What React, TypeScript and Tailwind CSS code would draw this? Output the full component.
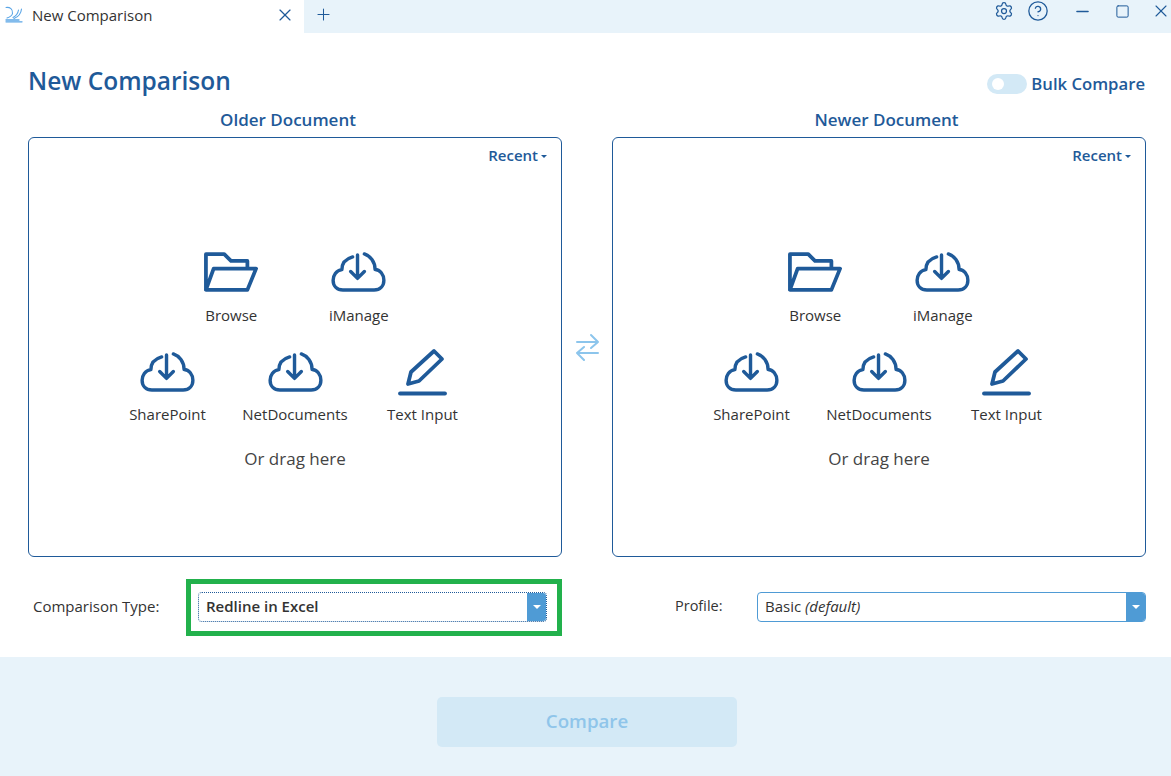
import { Settings, CircleHelp, Minus, Square, X, Plus } from "lucide-react";

const BLUE = "#1f5a99";

function CloudIcon() {
  return (
    <svg width="55" height="41" viewBox="0 0 56 42" fill="none" stroke={BLUE} strokeWidth="3.5" strokeLinecap="round" strokeLinejoin="round">
      <path d="M22 5C15 7 11 12 11 18C5 19 2 24 2 29C2 35 6 39 12 39H44C50 39 54 35 54 29C54 23 50 18 45 18C45 10 40 4 34 2" />
      <path d="M27 3V27M20 20L27 27L34 20" />
    </svg>
  );
}

function FolderIcon() {
  return (
    <svg width="54" height="41" viewBox="0 0 56 42" fill="none" stroke={BLUE} strokeWidth="3.9" strokeLinejoin="round">
      <path d="M2 39V2H21L28 9H45V17M2 39H45L54 17H10L2 39Z" />
    </svg>
  );
}

function PencilIcon() {
  return (
    <svg width="50" height="48" viewBox="0 0 50 48" fill="none" stroke={BLUE} strokeWidth="3.8" strokeLinejoin="round" strokeLinecap="round">
      <path d="M10 36L13 24L36 3L44 11L21 33Z" />
      <path d="M2 45.5H47" strokeWidth="3.8" />
    </svg>
  );
}

function Source({ icon, label, tight }: { icon: React.ReactNode; label: string; tight?: boolean }) {
  return (
    <div className="w-[127.5px] flex flex-col items-center">
      <div className="h-[48px] flex items-center justify-center">{icon}</div>
      <div className={`${tight ? "mt-[8px] mb-[1px]" : "mt-[9px]"} text-[15px] leading-[20px] text-[#333] whitespace-nowrap`}>{label}</div>
    </div>
  );
}

function DropPanel() {
  return (
    <div className="w-[534px] h-[420px] border border-[#1f5a99] rounded-[6px] flex flex-col">
      <div className="h-[34px] flex justify-end items-center gap-[3px] pr-[14px] text-[15px] font-semibold text-[#1f5a99]">
        Recent
        <span className="mt-[2px] w-0 h-0 border-x-[3px] border-x-transparent border-t-[3px] border-t-[#1f5a99]" />
      </div>
      <div className="pt-[76px] flex flex-col items-center">
        <div className="flex">
          <Source icon={<FolderIcon />} label="Browse" />
          <Source icon={<CloudIcon />} label="iManage" />
        </div>
        <div className="flex mt-[23px]">
          <Source tight icon={<CloudIcon />} label="SharePoint" />
          <Source tight icon={<CloudIcon />} label="NetDocuments" />
          <Source tight icon={<PencilIcon />} label="Text Input" />
        </div>
        <div className="mt-[22px] text-[17px] leading-[24px] text-[#444]">Or drag here</div>
      </div>
    </div>
  );
}

function SelectBox({ focused, children }: { focused?: boolean; children: React.ReactNode }) {
  return (
    <div className={`flex-1 h-[30px] flex rounded-[4px] overflow-hidden border ${focused ? "border-dotted border-[#1f5a99]" : "border-[#4f9bd5]"}`}>
      <div className="flex-1 pl-[7px] pb-[2px] flex items-center text-[15px] text-[#333]">{children}</div>
      <div className="w-[19px] bg-[#4f9bd5] flex items-center justify-center">
        <span className="w-0 h-0 border-x-[4px] border-x-transparent border-t-[4px] border-t-white" />
      </div>
    </div>
  );
}

export default function App() {
  return (
    <div className="w-[1171px] h-[776px] overflow-hidden bg-white flex flex-col" style={{ fontFamily: '"Open Sans", "Noto Sans", sans-serif' }}>
      {/* Title bar */}
      <div className="h-[33px] flex bg-[#e8f3fa] shrink-0">
        <div className="w-[304px] bg-white flex items-center pl-[5px] pb-[3px]">
          <svg width="18" height="18" viewBox="0 0 18 18" fill="none" stroke="#5aa5e6" strokeWidth="1.1" strokeLinecap="round">
            <path d="M1 1.5C5 1 8 3 7.5 7.5C7 10 5 11 2 12" />
            <path d="M16.5 3C16 8 13 11 9 12.5" />
            <path d="M13.5 4C13 7 11 10 8 11.5" />
            <path d="M1 14H14" strokeWidth="1.3" />
            <path d="M1 15.8H17" strokeWidth="1.3" />
          </svg>
          <span className="ml-[9px] text-[15px] text-[#333]">New Comparison</span>
          <X className="ml-auto mr-[9px]" size={20} strokeWidth={1.4} color={BLUE} />
        </div>
        <div className="w-[38px] flex items-center justify-center pb-[4px]">
          <Plus size={19} strokeWidth={1.3} color={BLUE} />
        </div>
        <div className="flex-1 flex justify-end items-center h-[22px]">
          <Settings size={20} strokeWidth={1.5} color={BLUE} />
          <CircleHelp className="ml-[13px]" size={22} strokeWidth={1.4} color={BLUE} />
          <Minus className="ml-[24px]" size={19} strokeWidth={2} color={BLUE} />
          <Square className="ml-[23px]" size={15} strokeWidth={1.6} color={BLUE} />
          <X className="ml-[21px]" size={20} strokeWidth={1.3} color={BLUE} />
        </div>
      </div>

      {/* Main */}
      <div className="flex-1 pl-[28px] pr-[25px]">
        <div className="h-[46px] mt-[26px] flex items-center justify-between">
          <h1 className="text-[24.5px] font-semibold text-[#1f5a99] leading-[42px] pb-[2px]">New Comparison</h1>
          <div className="flex items-center gap-[4px] mt-[4px] pr-[1px]">
            <div className="w-[40px] h-[20px] rounded-full bg-[#d3e9f6] flex items-center pl-[5px]">
              <span className="w-[12px] h-[12px] rounded-full bg-white" />
            </div>
            <span className="text-[16.7px] font-semibold text-[#1f5a99]">Bulk Compare</span>
          </div>
        </div>

        <div className="h-[32px] flex items-start pt-[1px]">
          <div className="w-[534px] pr-[14px] text-center text-[17px] leading-[28px] font-semibold text-[#1f5a99]">Older Document</div>
          <div className="w-[50px]" />
          <div className="w-[534px] pl-[15px] text-center text-[17px] leading-[28px] font-semibold text-[#1f5a99]">Newer Document</div>
        </div>

        <div className="flex items-center">
          <DropPanel />
          <div className="w-[50px] flex justify-center">
            <svg width="25" height="28" viewBox="0 0 25 28" fill="none" stroke="#8cc5ec" strokeWidth="2" strokeLinecap="round" strokeLinejoin="round">
              <path d="M2 9H23M16 2L23 9L16 15" />
              <path d="M23 20H2M9 14L2 20L9 27" />
            </svg>
          </div>
          <DropPanel />
        </div>

        <div className="mt-[22px] flex items-start h-[57px]">
          <div className="w-[534px] h-[57px] flex items-center">
            <span className="w-[158px] pl-[5px] pb-[3px] text-[15px] text-[#333] whitespace-nowrap">Comparison Type:</span>
            <div className="w-[376px] h-[57px] border-[5px] border-[#22b14c] flex items-center pl-[7px] pr-[10px] pb-[1px]">
              <SelectBox focused>
                <span className="font-semibold">Redline in Excel</span>
              </SelectBox>
            </div>
          </div>
          <div className="w-[50px]" />
          <div className="w-[534px] h-[56px] flex items-center pl-[63px]">
            <span className="w-[82px] pb-[2px] text-[14.5px] text-[#333]">Profile:</span>
            <SelectBox>
              <span>Basic <em>(default)</em></span>
            </SelectBox>
          </div>
        </div>
      </div>

      {/* Footer */}
      <div className="h-[119px] shrink-0 bg-[#e8f3fa] flex justify-center pt-[40px] pl-[3px]">
        <div className="w-[300px] h-[50px] pb-[2px] rounded-[5px] bg-[#d3e9f6] flex items-center justify-center text-[18.7px] font-semibold text-[#8fc5ea]">
          Compare
        </div>
      </div>
    </div>
  );
}
